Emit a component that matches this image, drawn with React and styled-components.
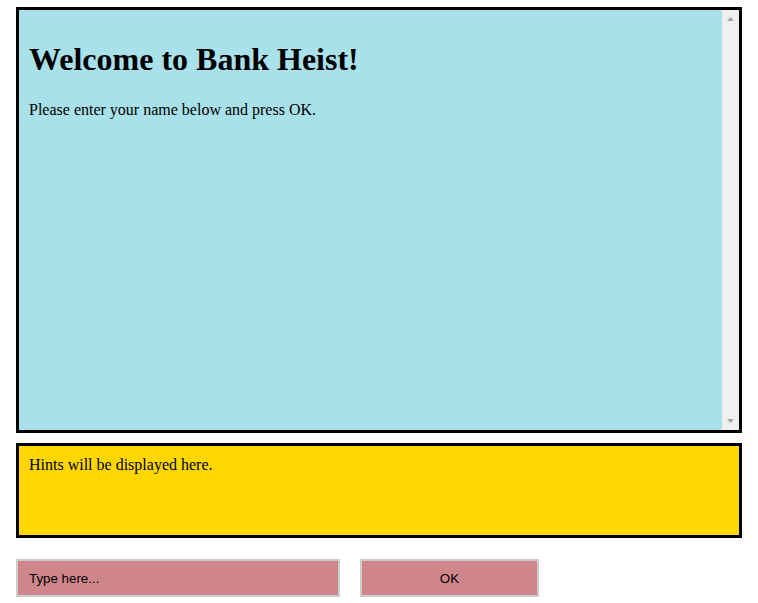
import React from "react";
import styled, { createGlobalStyle } from "styled-components";

const Global = createGlobalStyle`
  html, body { margin: 0; padding: 0; background: #fff; }
  body { font-family: "Liberation Serif", "Times New Roman", serif; color: #000; }
`;

const Page = styled.div`
  padding: 7px 16px 0;
  display: flex;
  flex-direction: column;
`;

const Story = styled.div`
  box-sizing: border-box;
  height: 426px;
  border: 3px solid #000;
  background: #a8e1ea;
  display: flex;
`;

const StoryText = styled.div`
  flex: 1;
  min-width: 0;
  padding: 0 10px;
  overflow: hidden;
`;

const Rail = styled.div`
  width: 17px;
  flex: none;
  background: #f0f0f0;
  display: flex;
  flex-direction: column;
  justify-content: space-between;
`;

const RailButton = styled.div`
  width: 17px;
  height: 17px;
  display: flex;
  justify-content: center;
  align-items: ${(p) => (p.$down ? "flex-start" : "flex-start")};
  padding-top: ${(p) => (p.$down ? "6px" : "7px")};
  box-sizing: border-box;
`;

const Arrow = ({ down }) => (
  <svg width="7" height="4" viewBox="0 0 7 4">
    <polygon
      points={down ? "0,0 7,0 3.5,4" : "0,4 7,4 3.5,0"}
      fill="#a3a3a3"
    />
  </svg>
);

const Title = styled.h1`
  font-size: 32px;
  font-weight: bold;
  margin: 31px 0 23px;
  line-height: normal;
`;

const Para = styled.p`
  font-size: 16px;
  margin: 0;
`;

const Hints = styled.div`
  box-sizing: border-box;
  height: 95px;
  margin-top: 10px;
  border: 3px solid #000;
  background: #ffd700;
  padding: 10px;
  font-size: 16px;
`;

const Controls = styled.div`
  display: flex;
  gap: 20px;
  margin-top: 21px;
`;

const TextInput = styled.input`
  box-sizing: border-box;
  width: 324px;
  height: 38px;
  border: 2px solid #cccccc;
  background: #cf868b;
  padding: 0 11px;
  font-family: "Liberation Sans", Arial, sans-serif;
  font-size: 13.33px;
  color: #000;
  outline: none;
  &::placeholder { color: #000; opacity: 1; }
`;

const OkButton = styled.button`
  box-sizing: border-box;
  width: 179px;
  height: 38px;
  border: 2px solid #cccccc;
  background: #cf868b;
  font-family: "Liberation Sans", Arial, sans-serif;
  font-size: 13.33px;
  color: #000;
  padding: 0;
`;

export default function App() {
  return (
    <>
      <Global />
      <Page>
        <Story>
          <StoryText>
            <Title>Welcome to Bank Heist!</Title>
            <Para>Please enter your name below and press OK.</Para>
          </StoryText>
          <Rail>
            <RailButton>
              <Arrow />
            </RailButton>
            <RailButton $down>
              <Arrow down />
            </RailButton>
          </Rail>
        </Story>
        <Hints>Hints will be displayed here.</Hints>
        <Controls>
          <TextInput placeholder="Type here..." />
          <OkButton>OK</OkButton>
        </Controls>
      </Page>
    </>
  );
}
